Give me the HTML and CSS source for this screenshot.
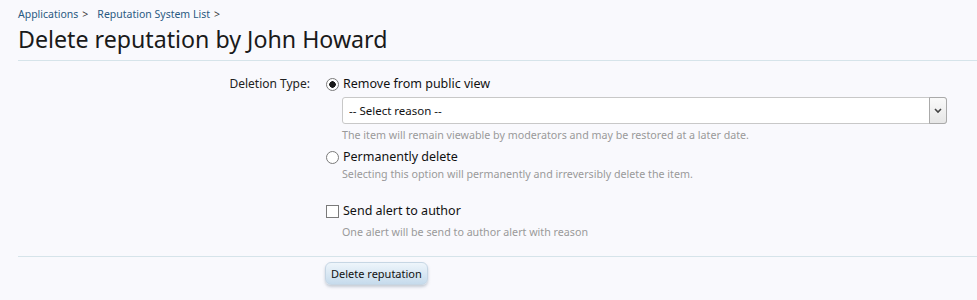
FILE: index.html
```html
<!DOCTYPE html>
<html>
<head>
<meta charset="utf-8">
<link rel="stylesheet" href="styles.css">
</head>
<body>
<div class="page">
  <nav class="crumbs">
    <a href="#">Applications</a><span class="sep">&gt;</span>
    <a href="#">Reputation System List</a><span class="sep">&gt;</span>
  </nav>
  <h1 class="title">Delete reputation by John Howard</h1>
  <form class="form">
    <div class="row">
      <div class="label">Deletion Type:</div>
      <div class="ctrls">
        <label class="opt"><input type="radio" name="t" checked> Remove from public view</label>
        <div class="sub">
          <div class="select-wrap">
            <select class="select"><option>-- Select reason --</option></select>
          </div>
          <p class="hint">The item will remain viewable by moderators and may be restored at a later date.</p>
        </div>
        <label class="opt opt2"><input type="radio" name="t"> Permanently delete</label>
        <p class="hint hint-tight">Selecting this option will permanently and irreversibly delete the item.</p>
        <label class="opt opt3"><input type="checkbox"> Send alert to author</label>
        <p class="hint hint-tight hint-last">One alert will be send to author alert with reason</p>
      </div>
    </div>
    <div class="submit">
      <button type="button" class="btn">Delete reputation</button>
    </div>
  </form>
</div>
</body>
</html>
```
FILE: styles.css
```css
html, body {
  margin: 0;
  padding: 0;
  background: #f9f9fd;
}
body {
  font-family: "Noto Sans", "Open Sans", sans-serif;
  color: #111;
}
.page {
  padding: 6px 0 0 18px;
}
.crumbs {
  font-size: 10.5px;
  line-height: 16px;
  display: flex;
  align-items: center;
}
.crumbs a {
  color: #2a5a82;
  text-decoration: none;
}
.crumbs .sep {
  color: #333;
  margin: 0 9px 0 4px;
}
.title {
  margin: 2px 0 0 0;
  font-size: 23.2px;
  font-weight: normal;
  line-height: 30px;
  color: #1a1a1a;
  padding-bottom: 6px;
  border-bottom: 1px solid #d6e4ea;
}
.form {
  margin: 0;
}
.row {
  display: grid;
  grid-template-columns: 292px 1fr;
  column-gap: 16px;
  padding-top: 14px;
}
.label {
  text-align: right;
  font-size: 12px;
  line-height: 18px;
  color: #222;
}
.ctrls {
  padding-right: 30px;
}
.opt {
  display: flex;
  align-items: center;
  font-size: 12.5px;
  line-height: 18px;
  color: #111;
}
.opt input {
  appearance: none;
  -webkit-appearance: none;
  width: 13px;
  height: 13px;
  margin: 0 4px 0 0;
  border: 1px solid #7a7a7a;
  background: #fff;
  box-sizing: border-box;
}
.opt input[type="radio"] {
  border-radius: 50%;
}
.opt input[type="radio"]:checked {
  background: radial-gradient(circle, #1a1a1a 0 3px, #fff 3.5px);
}
.sub {
  padding-left: 16px;
  padding-top: 4px;
}
.select-wrap {
  position: relative;
}
.select {
  appearance: none;
  -webkit-appearance: none;
  width: 100%;
  height: 27px;
  box-sizing: border-box;
  border: 1px solid #c8c8c8;
  border-radius: 3px;
  background: #fff;
  font-family: inherit;
  font-size: 11.5px;
  color: #111;
  padding: 0 24px 0 6px;
}
.select-wrap::after {
  content: "";
  position: absolute;
  right: 0;
  top: 0;
  width: 16px;
  height: 25px;
  border: 1px solid #aaa;
  border-radius: 0 3px 3px 0;
  background:
    url("data:image/svg+xml,%3Csvg xmlns='http://www.w3.org/2000/svg' width='8' height='6'%3E%3Cpath d='M1 1l3 3 3-3' fill='none' stroke='%23444' stroke-width='1.6'/%3E%3C/svg%3E") center no-repeat,
    linear-gradient(#fafafa, #e6e6e6);
}
.hint {
  margin: 0;
  font-size: 10.7px;
  line-height: 16px;
  color: #9a9a9a;
}
.sub .hint {
  margin-top: 3px;
}
.opt2 {
  margin-top: 5px;
}
.hint-tight {
  padding-left: 16px;
  margin-top: 0;
}
.opt3 {
  margin-top: 20px;
}
.hint-last {
  margin-top: 4px;
}
.submit {
  margin-top: 16px;
  border-top: 1px solid #d6e4ea;
  padding: 4px 0 12px 307px;
}
.btn {
  font-family: inherit;
  font-size: 11px;
  color: #111;
  height: 23px;
  padding: 0 5px;
  border: 1px solid #c6d6e4;
  border-radius: 6px;
  background: linear-gradient(#eef5fb, #c6dbec);
  box-shadow: 0 2px 3px rgba(100, 120, 140, 0.35);
}
```
